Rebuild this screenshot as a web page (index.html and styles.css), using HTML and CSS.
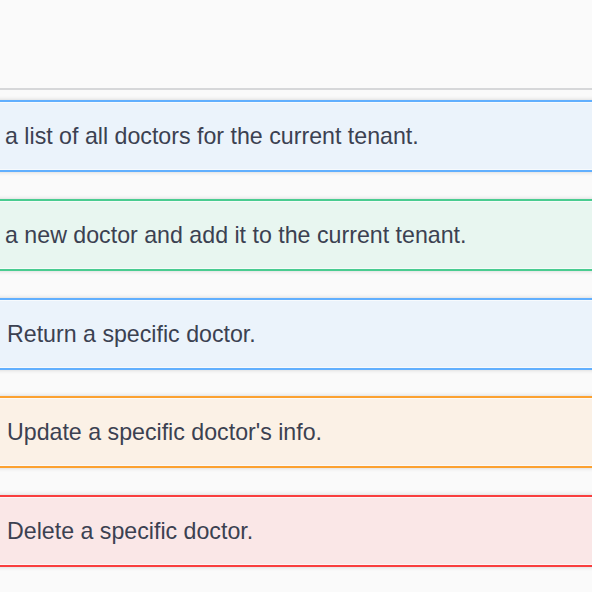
FILE: index.html
```html
<!DOCTYPE html>
<html>
<head>
<meta charset="utf-8">
<link rel="stylesheet" href="styles.css">
</head>
<body>
<div class="page">
  <div class="tag"></div>
  <div class="ops">
    <div class="op get"><span class="desc d1">a list of all doctors for the current tenant.</span></div>
    <div class="op post"><span class="desc d1">a new doctor and add it to the current tenant.</span></div>
    <div class="op get"><span class="desc d2">Return a specific doctor.</span></div>
    <div class="op put"><span class="desc d2">Update a specific doctor's info.</span></div>
    <div class="op delete"><span class="desc d2">Delete a specific doctor.</span></div>
  </div>
</div>
</body>
</html>
```
FILE: styles.css
```css
html, body {
  margin: 0;
  padding: 0;
  background: #fafafa;
  overflow: hidden;
}
.page {
  width: 592px;
  height: 592px;
  overflow: hidden;
}
.tag {
  height: 88px;
  border-bottom: 2px solid #d6d7d9;
  margin-bottom: 10px;
}
.ops {
  display: flex;
  flex-direction: column;
  gap: 26.75px;
  margin: 0 -12px;
}
.op {
  box-sizing: border-box;
  height: 72px;
  border: 2px solid #61affe;
  border-radius: 6px;
  display: flex;
  align-items: center;
  padding-left: 12px;
  box-shadow: 0 0 4px rgba(0,0,0,0.17), inset 0 0 0 1px rgba(255,255,255,0.6);
  font-family: "Liberation Sans", Arial, sans-serif;
  font-size: 23.2px;
  color: #3b4151;
  white-space: nowrap;
}
.op.get { border-color: #61affe; background: #ebf3fb; }
.op.post { border-color: #49cc90; background: #e8f6f0; }
.op.put { border-color: #fca130; background: #fbf1e6; }
.op.delete { border-color: #f93e3e; background: #fae7e7; }
.desc { padding-top: 1px; }
.d1 { margin-left: 3px; }
.d2 { margin-left: 5px; }
```
